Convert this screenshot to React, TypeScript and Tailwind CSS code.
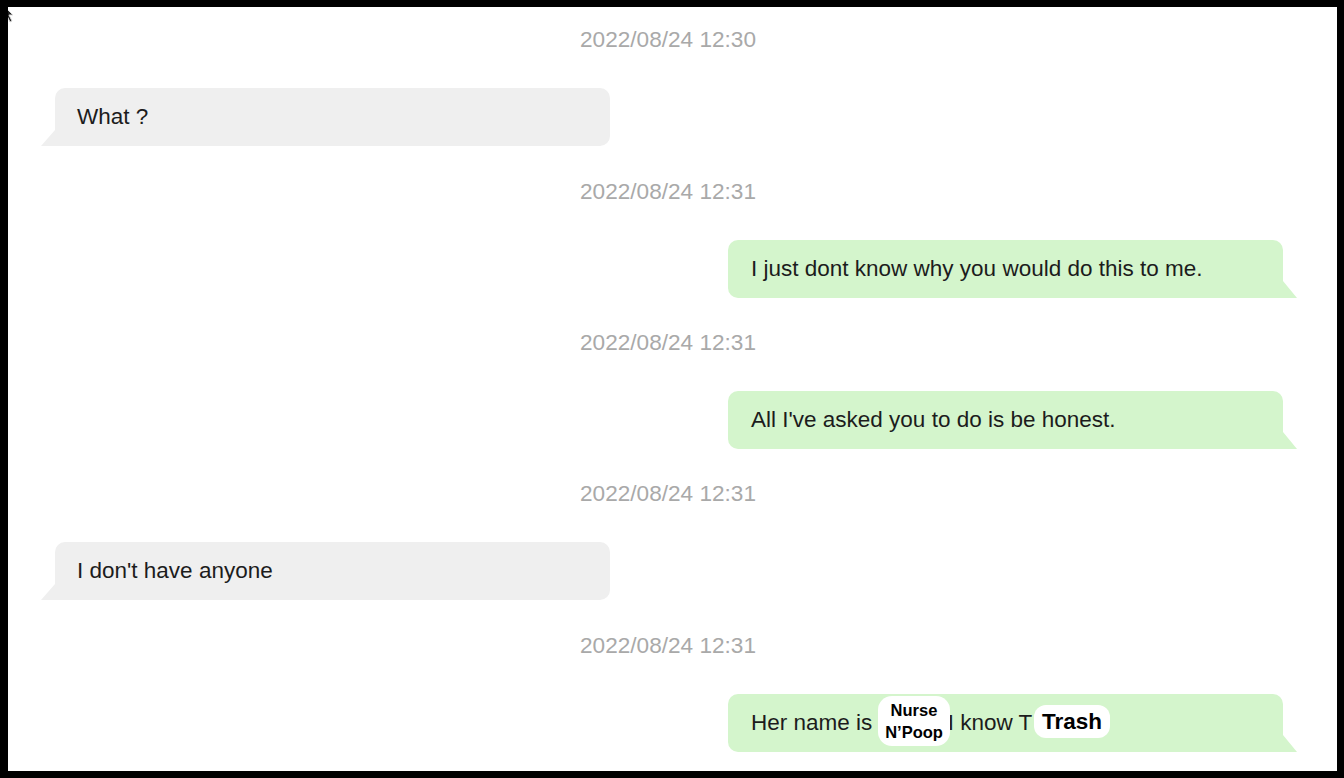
import React from "react";

const font = { fontFamily: '"Liberation Sans", Arial, Helvetica, sans-serif' };

function Stamp({ t }: { t: string }) {
  return (
    <div className="h-[28px] flex items-center justify-center pr-[9px] text-[22.6px] leading-[28px] text-[#a9a9a9]">
      {t}
    </div>
  );
}

function LeftBubble({ children }: { children: React.ReactNode }) {
  return (
    <div className="mt-[34px] mb-[32px] pl-[47px]">
      <div className="relative w-[555px] h-[58px] bg-[#efefef] rounded-[10px] rounded-bl-none flex items-center pl-[22px] text-[22.5px] text-[#1c1c1c]">
        <svg className="absolute left-[-14px] bottom-0" width="14" height="16" viewBox="0 0 14 16">
          <polygon points="14,0 14,16 0,16" fill="#efefef" />
        </svg>
        {children}
      </div>
    </div>
  );
}

function RightBubble({ children }: { children: React.ReactNode }) {
  return (
    <div className="mt-[34px] mb-[31px] flex justify-end pr-[54px]">
      <div className="relative w-[555px] h-[58px] bg-[#d4f5cc] rounded-[10px] rounded-br-none flex items-center pl-[23px] text-[22.5px] text-[#1c1c1c]">
        <svg className="absolute right-[-14px] bottom-0" width="14" height="17" viewBox="0 0 14 17">
          <polygon points="0,0 0,17 14,17" fill="#d4f5cc" />
        </svg>
        {children}
      </div>
    </div>
  );
}

export default function App() {
  return (
    <div
      className="w-[1344px] h-[778px] bg-black border-t-[7px] border-l-[8px] border-r-[7px] border-b-[7px] border-black overflow-hidden relative"
      style={font}
    >
      <div className="w-full h-full bg-white pt-[19px] overflow-hidden">
        <Stamp t="2022/08/24 12:30" />
        <LeftBubble>What ?</LeftBubble>
        <Stamp t="2022/08/24 12:31" />
        <RightBubble>I just dont know why you would do this to me.</RightBubble>
        <Stamp t="2022/08/24 12:31" />
        <RightBubble>All I've asked you to do is be honest.</RightBubble>
        <Stamp t="2022/08/24 12:31" />
        <LeftBubble>I don't have anyone</LeftBubble>
        <Stamp t="2022/08/24 12:31" />
        <RightBubble>
          <span className="whitespace-pre">Her name is T         I know T</span>
          <div className="absolute left-[150px] top-[2px] w-[72px] h-[50px] bg-white rounded-[14px] flex flex-col items-center justify-center text-[16.5px] font-bold text-black">
            <span className="leading-[22px]">Nurse</span>
            <span className="leading-[22px]">N’Poop</span>
          </div>
          <div className="absolute left-[306px] top-[11px] w-[76px] h-[33px] bg-white rounded-[12px] flex items-center justify-center text-[22.5px] leading-[28px] font-bold text-black">
            Trash
          </div>
        </RightBubble>
      </div>
      <svg className="absolute left-[-5px] top-[-2px]" width="12" height="18" viewBox="0 0 12 18">
        <path d="M1 1 L1 14 L4 11 L7 17 L9 16 L6 10 L10 10 Z" fill="#222" stroke="#ddd" strokeWidth="1" />
      </svg>
    </div>
  );
}
